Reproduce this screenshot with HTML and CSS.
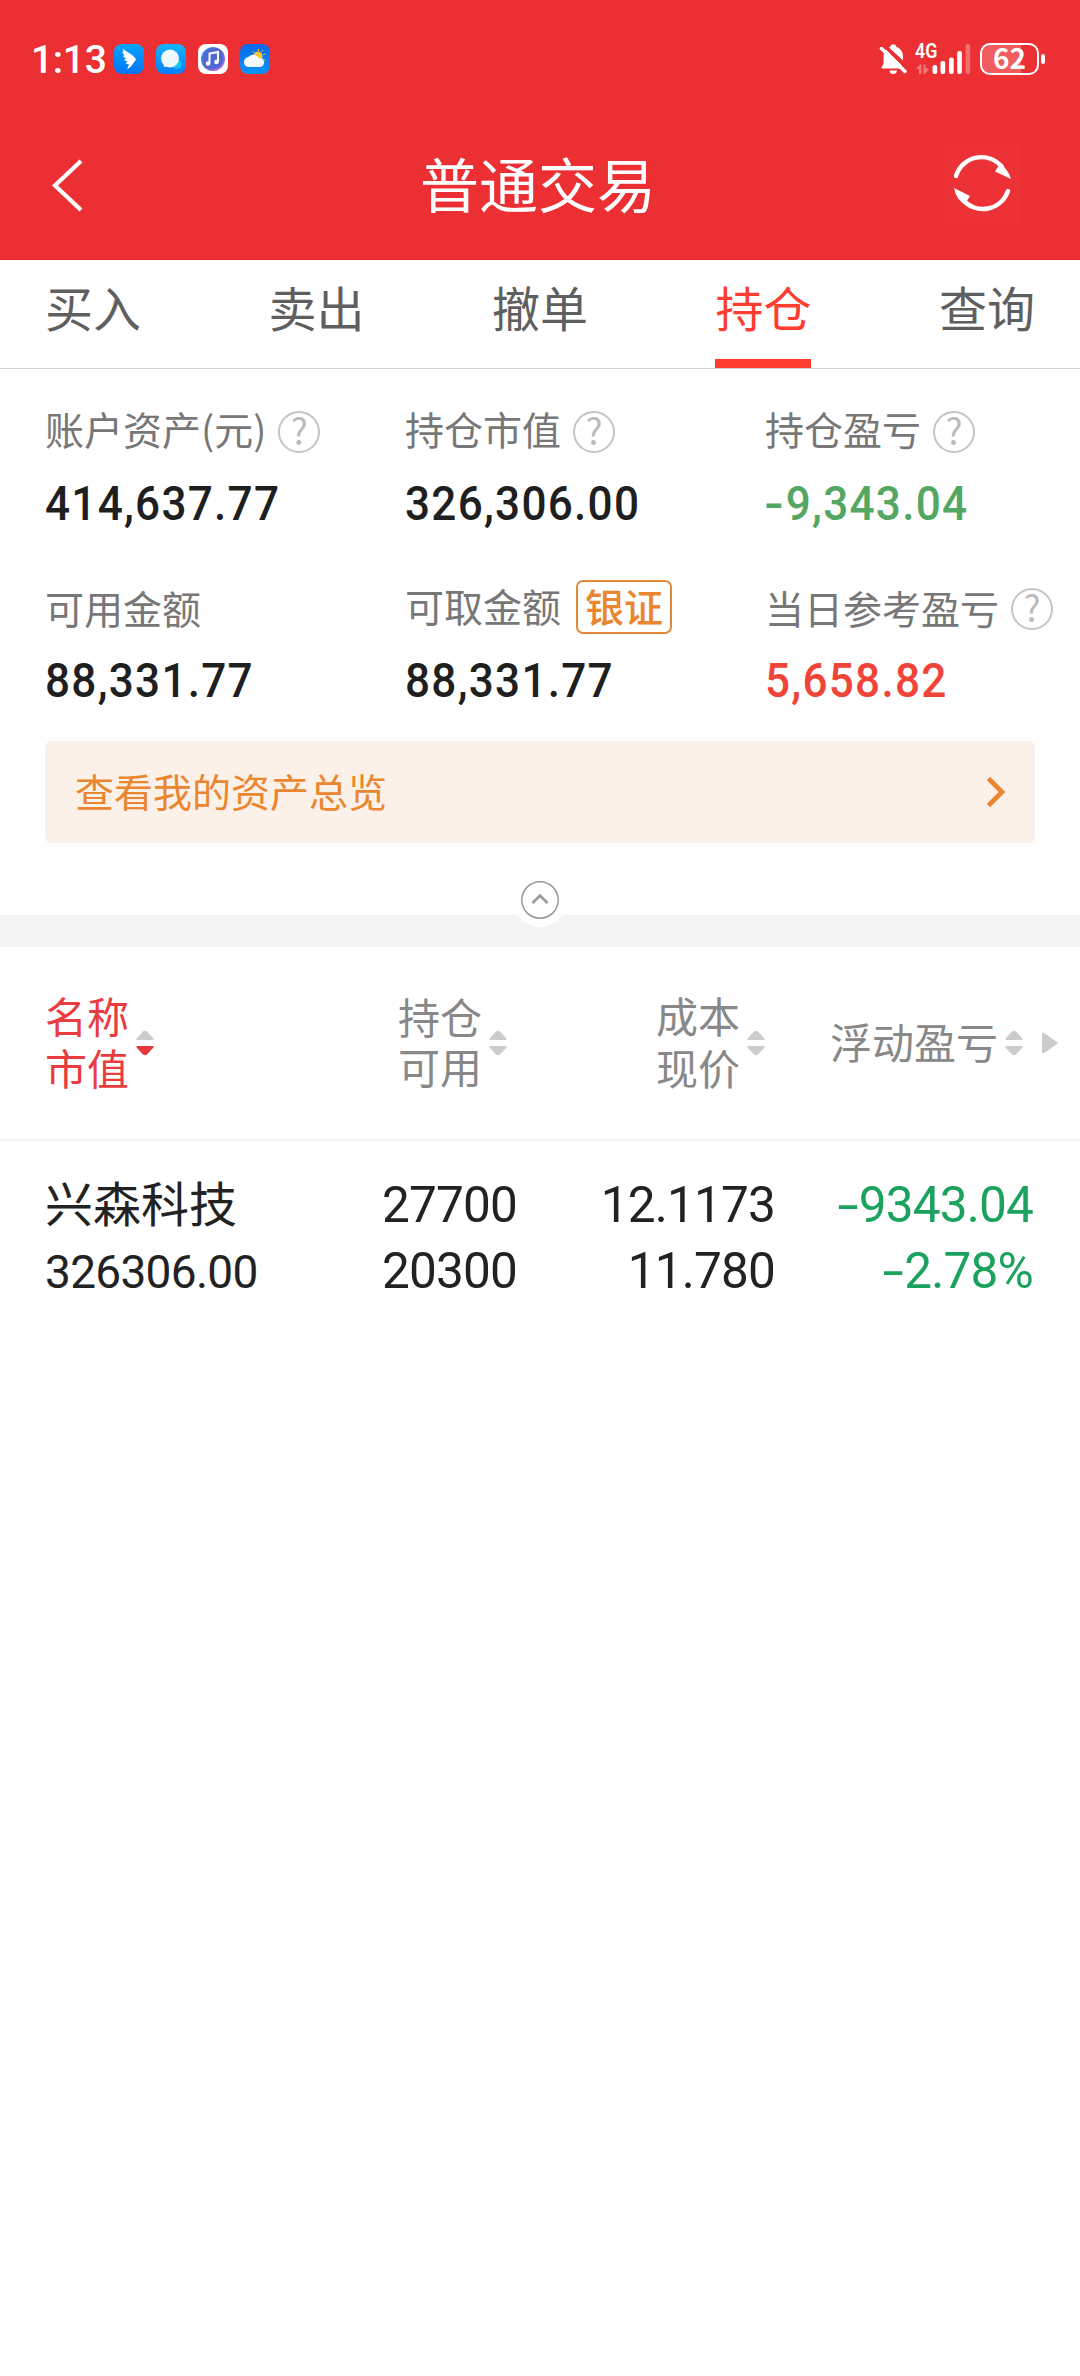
FILE: index.html
```
<!DOCTYPE html>
<html lang="zh-CN">
<head>
<meta charset="utf-8">
<title>普通交易</title>
<link rel="stylesheet" href="styles.css">
</head>
<body>
<header class="header">
  <div class="status">
    <span class="clock">1:13</span>
    <div class="apps">
      <svg width="30" height="30" viewBox="0 0 30 30"><defs><linearGradient id="a" x2="0" y2="1"><stop stop-color="#05a4ff"/><stop offset="1" stop-color="#0274fb"/></linearGradient></defs><rect width="30" height="30" rx="8" fill="url(#a)"/><path d="M8.500 4.500C12 8 20 10.500 22 15.500L17 22.500L13 25.500L15 20.500L11.500 19.500L13.500 17.500L10 16L12 14.500L8.500 12L10.500 11.500L8 8L9.500 8Z" fill="#fff"/></svg>
      <svg width="30" height="30" viewBox="0 0 30 30"><defs><linearGradient id="b" x2="0" y2="1"><stop stop-color="#14b4fb"/><stop offset="1" stop-color="#087ef8"/></linearGradient></defs><rect width="30" height="30" rx="8" fill="url(#b)"/><circle cx="20.500" cy="20" r="4.800" fill="#17c4f4"/><path d="M21 23L24.500 25L24 20Z" fill="#17c4f4"/><circle cx="14" cy="14.500" r="9" fill="#eefaff"/><path d="M7 18L8 23L13 22Z" fill="#eefaff"/></svg>
      <svg width="30" height="30" viewBox="0 0 30 30"><defs><linearGradient id="c" x2="1" y2="1"><stop stop-color="#4ba8f0"/><stop offset=".5" stop-color="#5361cf"/><stop offset="1" stop-color="#e36be8"/></linearGradient></defs><rect width="30" height="30" rx="8" fill="#fff"/><circle cx="15" cy="15" r="12" fill="url(#c)"/><circle cx="15" cy="14.500" r="10.500" fill="#4f69d4"/><path d="M11.500 19.500V9.500L20 8V18" fill="none" stroke="#fff" stroke-width="2"/><circle cx="10" cy="19.500" r="2.300" fill="#fff"/><circle cx="18.500" cy="18" r="2.300" fill="#fff"/></svg>
      <svg width="30" height="30" viewBox="0 0 30 30"><defs><linearGradient id="d" x2="0" y2="1"><stop stop-color="#0868ec"/><stop offset="1" stop-color="#0c94fb"/></linearGradient></defs><rect width="30" height="30" rx="8" fill="url(#d)"/><path d="M18.500 5V7M23 6L22 7.500M12.500 7L14 8.500M25.500 10L23.500 10.500M25 16L23 15" stroke="#f3c63f" stroke-width="1"/><circle cx="18" cy="12" r="4.500" fill="#fbc52e"/><path d="M9.500 23A5 5 0 0 1 8.500 13A6 6 0 0 1 18.500 14A4.500 4.500 0 1 1 20.500 23Z" fill="#f5faff"/></svg>
    </div>
    <svg class="bell" width="28" height="32" viewBox="0 0 28 32"><path d="M3 24L5 21V13Q5 9.500 7 7L21 21L24 25H3Z" fill="#fff" stroke="#fff" stroke-linejoin="round"/><path d="M10 4.500Q12 3.500 12.500 1.500H16Q16.500 3.500 19 4.500Q24 7.500 24 13V17.500Z" fill="#fff"/><path d="M10.500 27.500H18Q17.500 31 14.200 31T10.500 27.500Z" fill="#fff"/><path d="M2.500 5.500L26 28.500" stroke="#fff" stroke-width="3.500" stroke-linecap="round"/></svg>
    <div class="network">
      <span class="gen">4G</span>
      <svg width="56" height="32" viewBox="0 0 56 32"><g fill="#fff"><path opacity=".35" d="M1 26L5 21.500H6.500V31H4V26ZM8.500 21.500H10.500V25L14 26L10 31H8.500Z"/><rect x="17.500" y="22" width="4.700" height="9" rx="2"/><rect x="25.500" y="18" width="4.700" height="13" rx="2"/><rect x="34" y="14.500" width="4.700" height="16.500" rx="2"/><rect x="42.200" y="8" width="4.700" height="23" rx="2"/><rect opacity=".3" x="50.500" y="1" width="4.700" height="30" rx="2"/></g></svg>
    </div>
    <div class="battery"><span>62</span></div>
    <i class="nub"></i>
  </div>
  <div class="titlebar">
    <svg width="34" height="54" viewBox="0 0 34 54"><path d="M31 3L5 27.500L31 52" fill="none" stroke="#fff" stroke-width="4.200"/></svg>
    <h1 class="title">普通交易</h1>
    <div class="refresh"><svg width="78" height="78" viewBox="0 0 78 78"><g fill="none" stroke="#fff" stroke-width="4.400" stroke-linecap="round"><path d="M14 30A26.500 26.500 0 0 1 60 21"/><path d="M66 45A26.500 26.500 0 0 1 21 54"/></g><path d="M55 15.500Q66 22 69 33L53 25.500L56.500 20ZM25 60Q14 54 12 42L28 50L24.500 55.500Z" fill="#fff"/></svg></div>
  </div>
</header>
<nav class="tabs">
  <a class="tab">买入</a><a class="tab">卖出</a><a class="tab">撤单</a><a class="tab active">持仓</a><a class="tab">查询</a>
</nav>
<section class="summary">
  <div class="metrics">
    <div><div class="label first"><span>账户资产(元)</span><i class="help">?</i></div><div class="value">414,637.77</div></div>
    <div><div class="label first"><span>持仓市值</span><i class="help">?</i></div><div class="value">326,306.00</div></div>
    <div><div class="label first"><span>持仓盈亏</span><i class="help">?</i></div><div class="value down"><span class="minus">-</span>9,343.04</div></div>
    <div><div class="label"><span>可用金额</span></div><div class="value">88,331.77</div></div>
    <div><div class="label raised"><span>可取金额</span><b class="badge">银证</b></div><div class="value">88,331.77</div></div>
    <div><div class="label"><span>当日参考盈亏</span><i class="help">?</i></div><div class="value up">5,658.82</div></div>
  </div>
  <a class="banner"><span>查看我的资产总览</span><svg width="20" height="32" viewBox="0 0 20 32"><path d="M2.500 2.500L16 16L2.500 29.500" fill="none" stroke="#e9862f" stroke-width="4.600"/></svg></a>
</section>
<div class="divider"><div class="collapse"><svg width="40" height="40" viewBox="0 0 40 40"><circle cx="20" cy="20" r="18.200" fill="#fff" stroke="#999" stroke-width="1.500"/><path d="M12.500 23L20 15.500L27.500 23" fill="none" stroke="#999" stroke-width="2.600"/></svg></div></div>
<svg width="0" height="0" class="defs"><defs><path id="up" d="M.5 10Q0 9 1 8L7 1.500Q9 0 11 1.500L17 8Q18 9 17.500 10Z"/><path id="dn" d="M.5 16Q0 17 1 18L7 24.500Q9 26 11 24.500L17 18Q18 17 17.500 16Z"/></defs></svg>
<section class="table">
  <div class="grid head">
    <div class="cell name"><span>名称<br>市值</span><svg class="sort desc" width="18" height="26"><use href="#up"/><use class="dn" href="#dn"/></svg></div>
    <div class="cell"><span class="tight">持仓<br>可用</span><svg class="sort" width="18" height="26"><use href="#up"/><use href="#dn"/></svg></div>
    <div class="cell"><span>成本<br>现价</span><svg class="sort" width="18" height="26"><use href="#up"/><use href="#dn"/></svg></div>
    <div class="cell last"><span>浮动盈亏</span><svg class="sort" width="18" height="26"><use href="#up"/><use href="#dn"/></svg><svg class="more" width="16" height="22" viewBox="0 0 16 22"><path d="M0 2Q0 0 2 1L15 10Q16.500 11 15 12L2 21Q0 22 0 20Z" fill="#ccc"/></svg></div>
  </div>
  <div class="grid row">
    <div class="stock">兴森科技<br><small>326306.00</small></div>
    <div class="num">27700<br>20300</div>
    <div class="num">12.1173<br>11.780</div>
    <div class="num loss"><span class="minus">-</span>9343.04<br><span class="minus">-</span>2.78%</div>
  </div>
</section>
</body>
</html>
```
FILE: styles.css
```
* { box-sizing: border-box; }
body {
  margin: 0;
  width: 1080px;
  min-height: 2376px;
  background: #fff;
  color: #222;
  font-family: "Noto Sans CJK SC", sans-serif;
}
svg { display: block; flex: none; }
i, b { font-style: normal; }
.defs { position: absolute; }

.header { height: 260px; background: #ec2f32; color: #fff; }
.status { display: flex; align-items: center; height: 118px; padding: 0 35px 0 31px; }
.clock { width: 83px; font: 500 39px/40px Roboto, sans-serif; letter-spacing: -0.3px; white-space: nowrap; margin-top: 1px; }
.apps { display: flex; gap: 12px; }
.bell { margin-left: auto; margin-right: 8px; }
.network { position: relative; margin-right: 9px; }
.gen {
  position: absolute; left: 0; top: 1px;
  font: 600 20.5px/15px Roboto, sans-serif;
  transform: scaleX(.87); transform-origin: 0 0;
}
.battery {
  width: 59px; height: 32px;
  border: 2.500px solid #fff; border-radius: 10px;
  background: linear-gradient(90deg, rgba(255,255,255,.22) 39px, transparent 39px);
  font: 600 28px/27px "Noto Sans CJK SC", sans-serif;
  text-align: center;
}
.battery span { display: block; margin-top: -1px; }
.nub { width: 4px; height: 10px; margin-left: 2px; border-radius: 2px; background: #fff; }
.titlebar { display: flex; align-items: center; height: 134px; padding: 0 60px 0 50px; }
.title { flex: 1; margin: 0 0 5px 50px; text-align: center; font-size: 59px; font-weight: 400; line-height: 80px; }
.refresh { background: #ed3237; }

.tabs { display: flex; justify-content: space-between; height: 109px; padding: 0 45px; border-bottom: 1px solid #d3d3d3; }
.tab { height: 108px; border-bottom: 9px solid transparent; color: #5f5f5f; font-size: 48px; line-height: 93px; }
.tab.active { color: #fe3e30; border-color: #fe3e30; }

.summary { height: 546px; padding: 42px 0 0 45px; }
.metrics { display: grid; grid-template-columns: 360px 360px 315px; row-gap: 56px; }
.label { display: flex; align-items: center; height: 42px; color: #777; font-size: 39px; line-height: 42px; white-space: nowrap; }
.label span { margin-bottom: 5px; }
.label.first span { margin-bottom: 8px; }
.label.raised { padding-bottom: 4px; }
.help {
  flex: none; width: 42px; height: 42px; margin-left: 12px;
  border: 2px solid #c4c4c4; border-radius: 50%;
  color: #bbb; text-align: center; font-size: 36px; line-height: 33px;
}
.badge {
  flex: none; width: 96px; height: 54px; margin-left: 15px;
  border: 2px solid #e0893b; border-radius: 7px;
  color: #e9862f; text-align: center; font-weight: 500; line-height: 46px;
}
/* narrow, widely set figures */
.value {
  margin-top: 22px; height: 57px;
  font: 500 49px/58px Roboto, sans-serif; letter-spacing: 1.400px; color: #1f1f1f;
  transform: scaleX(.9); transform-origin: 0 0;
}
.value .minus { transform: scaleX(1.3); margin: 0 3px 0 2px; }
.value.down { color: #54a763; }
.value.up { color: #f04438; }
.banner {
  display: flex; align-items: center; justify-content: space-between;
  width: 990px; height: 102px; margin-top: 32px; padding: 0 29px 0 30px;
  border-radius: 6px; background: #fcf1e8;
  color: #e9862f; font-size: 39px; line-height: 50px;
}
.banner span { margin-bottom: 5px; }

.divider { position: relative; height: 32px; background: #f4f4f4; }
.collapse {
  position: absolute; left: 513px; top: -42px; width: 54px; height: 54px; padding: 7px;
  border-radius: 50%; background: #fff;
}

.grid { display: grid; }
.head {
  grid-template-columns: 205px 257px 258px 315px;
  height: 194px; padding-left: 45px; align-items: center;
  border-bottom: 2px solid #f3f3f3; color: #888; font-size: 42px; line-height: 52px;
}
.cell { display: flex; align-items: center; justify-content: flex-end; gap: 7px; }
.cell span { margin-bottom: 4px; }
.cell .tight { line-height: 50px; }
.cell.name { justify-content: flex-start; color: #e93c40; }
.cell.last { padding-right: 22px; }
.sort { fill: #ccc; }
.desc .dn { fill: #e4393c; }
.more { margin-left: 12px; }
.row {
  grid-template-columns: 214px 258px 258px 258px;
  padding: 27px 0 0 45px; font-size: 48px; line-height: 66px; color: #222;
}
.stock small { font: 400 46px/1 Roboto, sans-serif; letter-spacing: -0.700px; }
.num { padding-top: 4px; text-align: right; font-family: Roboto, sans-serif; font-size: 49.500px; letter-spacing: -0.800px; }
.loss { color: #1ba25e; }
.minus { display: inline-block; transform: scaleX(1.55); margin: 0 5px 0 4px; }
```
